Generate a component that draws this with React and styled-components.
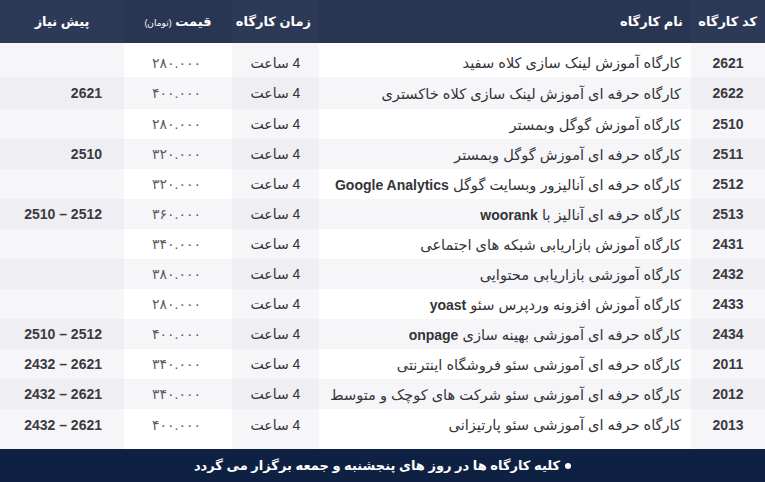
import React from "react";
import styled, { createGlobalStyle } from "styled-components";

const GlobalStyle = createGlobalStyle`
  html, body {
    margin: 0;
    padding: 0;
    background: #ffffff;
  }
  body {
    font-family: "Liberation Sans", "DejaVu Sans", sans-serif;
  }
`;

const rows = [
  { code: "2621", name: "کارگاه آموزش لینک سازی کلاه سفید", price: "۲۸۰.۰۰۰", req: "" },
  { code: "2622", name: "کارگاه حرفه ای آموزش لینک سازی کلاه خاکستری", price: "۴۰۰.۰۰۰", req: "2621" },
  { code: "2510", name: "کارگاه آموزش گوگل وبمستر", price: "۲۸۰.۰۰۰", req: "" },
  { code: "2511", name: "کارگاه حرفه ای آموزش گوگل وبمستر", price: "۳۲۰.۰۰۰", req: "2510" },
  { code: "2512", name: "کارگاه حرفه ای آنالیزور وبسایت گوگل", latin: "Google Analytics", price: "۳۲۰.۰۰۰", req: "" },
  { code: "2513", name: "کارگاه حرفه ای آنالیز با", latin: "woorank", price: "۳۶۰.۰۰۰", req: "2510 – 2512" },
  { code: "2431", name: "کارگاه آموزش بازاریابی شبکه های اجتماعی", price: "۳۴۰.۰۰۰", req: "" },
  { code: "2432", name: "کارگاه آموزشی بازاریابی محتوایی", price: "۳۸۰.۰۰۰", req: "" },
  { code: "2433", name: "کارگاه آموزش افزونه وردپرس سئو", latin: "yoast", price: "۲۸۰.۰۰۰", req: "" },
  { code: "2434", name: "کارگاه حرفه ای آموزشی بهینه سازی", latin: "onpage", price: "۴۰۰.۰۰۰", req: "2510 – 2512" },
  { code: "2011", name: "کارگاه حرفه ای آموزشی سئو فروشگاه اینترنتی", price: "۳۴۰.۰۰۰", req: "2432 – 2621" },
  { code: "2012", name: "کارگاه حرفه ای آموزشی سئو شرکت های کوچک و متوسط", price: "۳۴۰.۰۰۰", req: "2432 – 2621" },
  { code: "2013", name: "کارگاه حرفه ای آموزشی سئو پارتیزانی", price: "۴۰۰.۰۰۰", req: "2432 – 2621" },
];

const Page = styled.div`
  width: 765px;
  height: 482px;
  display: flex;
  flex-direction: column;
  direction: rtl;
  overflow: hidden;
`;

const Table = styled.table`
  width: 765px;
  border-collapse: collapse;
  table-layout: fixed;
  direction: rtl;
`;

const HeadRow = styled.tr`
  background: #283654;
`;

const HeadCell = styled.th`
  height: 43px;
  padding: 0 8px;
  color: #ffffff;
  font-size: 13px;
  font-weight: bold;
  text-align: ${(p) => p.$align || "center"};
  white-space: nowrap;
  background: ${(p) => (p.$tint ? "rgba(255,255,255,0.018)" : "transparent")};
`;

const Small = styled.small`
  font-size: 9px;
  font-weight: normal;
`;

const cellBg = (p) => {
  if (p.$even) return p.$tint ? "#eeeef3" : "#f6f6f9";
  return p.$tint ? "#f6f6f9" : "#ffffff";
};

const Cell = styled.td`
  height: ${(p) => (p.$first ? "34px" : p.$last ? "40px" : p.$second ? "32px" : "30px")};
  padding: ${(p) => (p.$first ? "5px 0 0" : p.$last ? "0 0 9px" : "0")};
  padding-right: ${(p) => p.$pr || "0"};
  box-sizing: border-box;
  background: ${cellBg};
  color: #333338;
  font-size: ${(p) => p.$size || "14px"};
  text-align: ${(p) => p.$align || "center"};
  white-space: nowrap;
  vertical-align: middle;
`;

const Code = styled.span`
  font-weight: bold;
  color: #3a3a40;
`;

const Latin = styled.b`
  font-size: 14px;
  color: #333338;
`;

const Price = styled.span`
  display: inline-block;
  color: #5a5a60;
  font-size: 14px;
  letter-spacing: 2.8px;
  margin-left: -3px;
`;

const Req = styled.span`
  display: inline-block;
  direction: ltr;
  font-weight: bold;
  color: #3a3a40;
`;

const Footer = styled.div`
  height: 33px;
  background: #0f2143;
  color: #ffffff;
  display: flex;
  align-items: center;
  justify-content: center;
  font-size: 13px;
  font-weight: bold;
  gap: 5px;
`;

const Dot = styled.span`
  width: 6px;
  height: 6px;
  border-radius: 50%;
  background: #ffffff;
`;

export default function App() {
  return (
    <>
      <GlobalStyle />
      <Page>
        <Table>
          <colgroup>
            <col style={{ width: 74 }} />
            <col style={{ width: 372 }} />
            <col style={{ width: 87 }} />
            <col style={{ width: 108 }} />
            <col style={{ width: 124 }} />
          </colgroup>
          <thead>
            <HeadRow>
              <HeadCell $tint>کد کارگاه</HeadCell>
              <HeadCell $align="right">نام کارگاه</HeadCell>
              <HeadCell $tint>زمان کارگاه</HeadCell>
              <HeadCell>
                قیمت <Small>(تومان)</Small>
              </HeadCell>
              <HeadCell $tint>پیش نیاز</HeadCell>
            </HeadRow>
          </thead>
          <tbody>
            {rows.map((r, i) => {
              const flags = {
                $even: i % 2 === 1,
                $first: i === 0,
                $second: i === 1,
                $last: i === rows.length - 1,
              };
              return (
                <tr key={r.code}>
                  <Cell {...flags} $tint>
                    <Code>{r.code}</Code>
                  </Cell>
                  <Cell {...flags} $align="right" $pr="10px" $size="14.6px">
                    {r.name}
                    {r.latin && <> <Latin>{r.latin}</Latin></>}
                  </Cell>
                  <Cell {...flags} $tint>
                    4 ساعت
                  </Cell>
                  <Cell {...flags}>
                    <Price>{r.price}</Price>
                  </Cell>
                  <Cell {...flags} $tint $align="right" $pr="22px">
                    {r.req && <Req>{r.req}</Req>}
                  </Cell>
                </tr>
              );
            })}
          </tbody>
        </Table>
        <Footer>
          <Dot />
          کلیه کارگاه ها در روز های پنجشنبه و جمعه برگزار می گردد
        </Footer>
      </Page>
    </>
  );
}
